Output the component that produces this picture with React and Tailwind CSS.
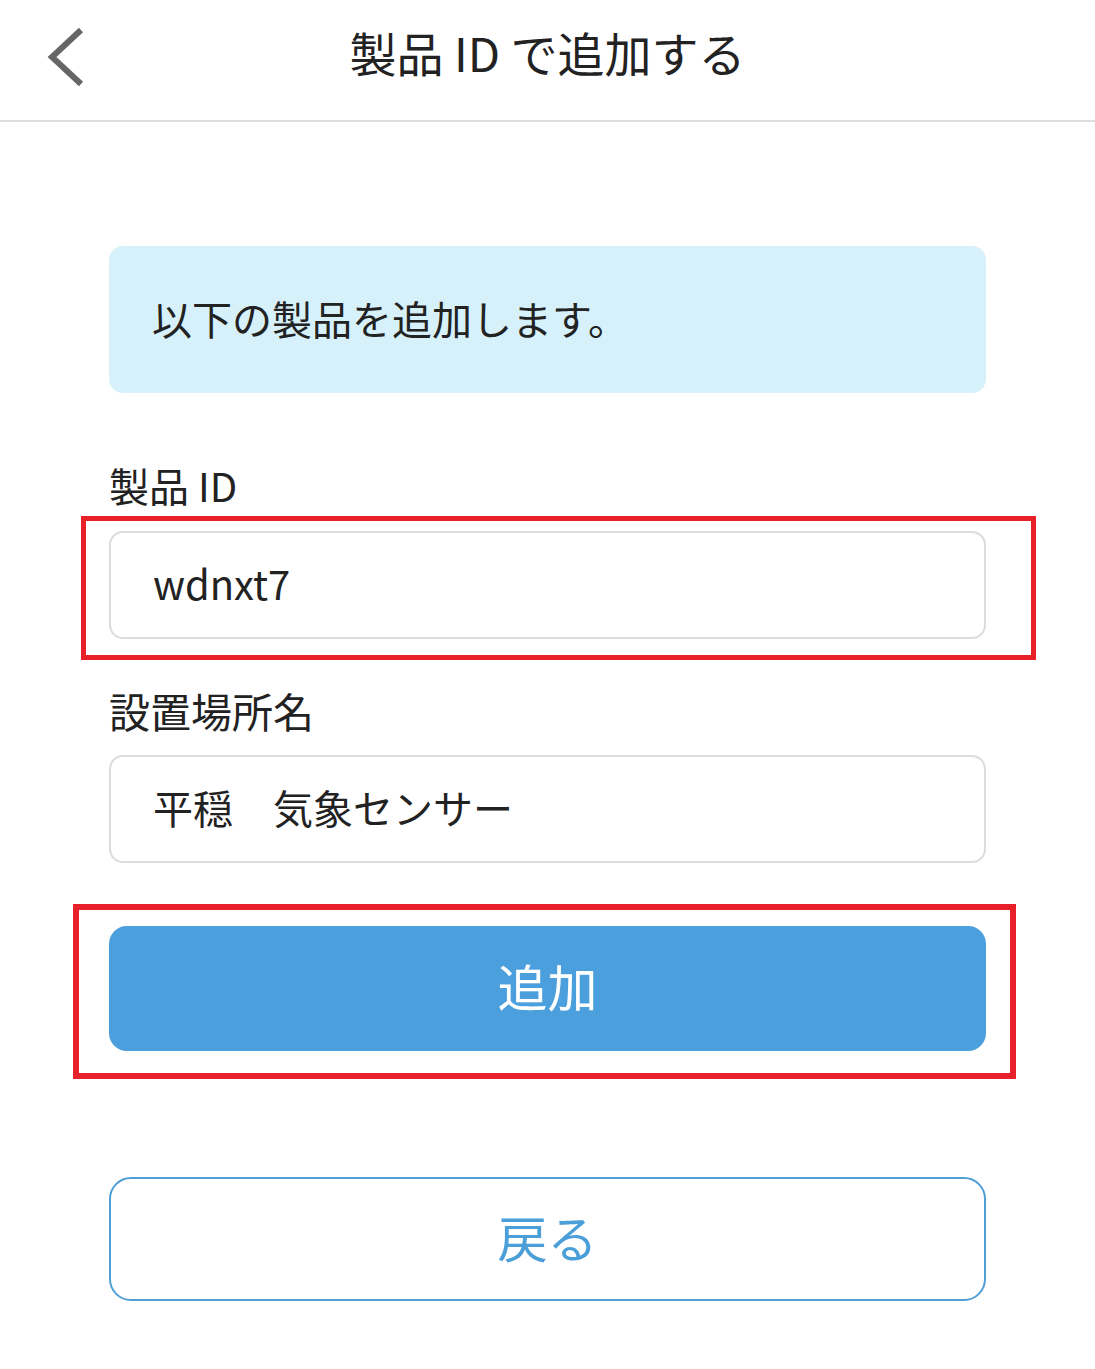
import React from "react";

const jp = { fontFamily: '"Noto Sans CJK JP", "Noto Sans", sans-serif' };

export default function App() {
  return (
    <div className="min-h-[1369px] w-full bg-white text-[#222]" style={jp}>
      {/* ヘッダー */}
      <header className="relative flex h-[122px] items-center justify-center border-b-2 border-[#dedede]">
        <button className="absolute left-[44px] top-[26px] p-0">
          <svg width="44" height="62" viewBox="0 0 44 62">
            <polyline
              points="37,4 8,31 37,58"
              fill="none"
              stroke="#666666"
              strokeWidth="6"
            />
          </svg>
        </button>
        <h1 className="-mt-[18px] text-[47px] font-normal leading-none">製品 ID で追加する</h1>
      </header>

      <main className="px-[109px]">
        <div className="mt-[124px] flex h-[147px] items-center rounded-[14px] bg-[#d6f1fa] pb-[4px] pl-[43px]">
          <p className="text-[40px] leading-none">以下の製品を追加します。</p>
        </div>

        <label className="mt-[68px] block text-[40px] leading-[48px]">製品 ID</label>
        <div className="relative mt-[22px]">
          <div className="flex h-[108px] items-center rounded-[14px] border-2 border-[#dcdcdc] pb-[4px] pl-[42px] text-[40px]">
            wdnxt7
          </div>
          <div className="pointer-events-none absolute -bottom-[21px] -left-[28px] -right-[50px] -top-[15px] border-[5px] border-[#e8202a]" />
        </div>

        <label className="mt-[47px] block text-[41px] leading-[48px]">設置場所名</label>
        <div className="mt-[21px] flex h-[108px] items-center rounded-[14px] border-2 border-[#dcdcdc] pb-[4px] pl-[42px] text-[40px]">
          平穏　気象センサー
        </div>

        <div className="relative mt-[63px]">
          <button className="flex h-[125px] w-full items-center justify-center rounded-[18px] bg-[#4a9fdc] pb-[6px] text-[50px] text-white">
            追加
          </button>
          <div className="pointer-events-none absolute -bottom-[28px] -left-[36px] -right-[30px] -top-[22px] border-[6px] border-[#e8202a]" />
        </div>

        <button className="mt-[126px] flex h-[124px] w-full items-center justify-center rounded-[22px] border-2 border-[#4f9fd6] bg-white pb-[6px] text-[50px] text-[#4a9fd8]">
          戻る
        </button>
      </main>
    </div>
  );
}
